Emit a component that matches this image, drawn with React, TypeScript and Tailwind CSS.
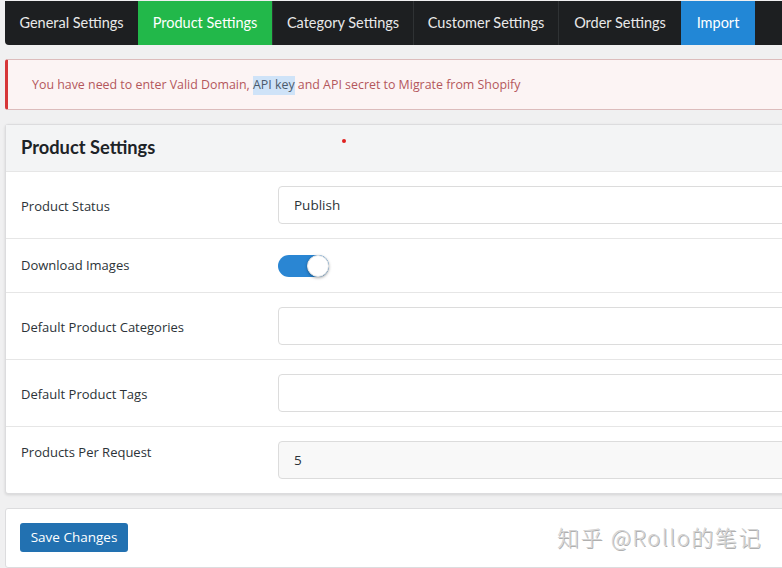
import React from "react";

const tabs = [
  { label: "General Settings", w: 133, tone: "dark" },
  { label: "Product Settings", w: 134, tone: "green" },
  { label: "Category Settings", w: 141, tone: "dark" },
  { label: "Customer Settings", w: 145, tone: "dark" },
  { label: "Order Settings", w: 123, tone: "dark" },
  { label: "Import", w: 74, tone: "blue" },
];

const lato = { fontFamily: "Lato, 'Open Sans', sans-serif" };
const body = { fontFamily: "'Open Sans', 'Noto Sans', sans-serif" };

function TextField({ value, muted }: { value?: string; muted?: boolean }) {
  return (
    <div
      className={`h-[38px] flex-1 rounded-[4px] border border-[#dcdcdc] flex items-center pl-[15px] text-[13.5px] text-[#2c3338] ${
        muted ? "bg-[#f8f8f8]" : "bg-white"
      }`}
    >
      {value}
    </div>
  );
}

function Toggle() {
  return (
    <div className="relative h-[22px] w-[51px] rounded-full bg-[#2a86d3]">
      <div className="absolute right-0 top-0 h-[22px] w-[22px] rounded-full bg-white shadow-[0_1px_3px_rgba(0,0,0,0.35)] border border-[#e5e5e5]" />
    </div>
  );
}

function Row({
  label,
  children,
  align = "field",
}: {
  label: string;
  children: React.ReactNode;
  align?: "field" | "top" | "plain";
}) {
  const labelPad =
    align === "top" ? "leading-[22px]" : align === "field" ? "pt-[3px]" : "";
  return (
    <div
      className={`flex border-t border-[#e6e6e6] py-[14px] ${
        align === "top" ? "items-start" : "items-center"
      }`}
    >
      <div className={`w-[272px] shrink-0 pl-[15px] text-[13px] text-[#2c3338] ${labelPad}`}>
        {label}
      </div>
      <div className="flex flex-1 items-center">{children}</div>
    </div>
  );
}

export default function App() {
  return (
    <div
      className="relative h-[568px] w-[782px] overflow-hidden bg-[#f0f0f1] pl-[5px] pt-px"
      style={body}
    >
      <div className="w-[800px]">
        {/* tab bar */}
        <div className="flex h-[44px] rounded-bl-[4px] bg-[#1d1f21]" style={lato}>
          {tabs.map((t, i) => (
            <div
              key={t.label}
              style={{ width: t.w }}
              className={`flex items-center justify-center text-[14.5px] ${
                t.tone === "green"
                  ? "bg-[#22b84a] text-white"
                  : t.tone === "blue"
                  ? "bg-[#2287d6] text-white"
                  : "text-[#e9e9e9]"
              } ${i > 1 && t.tone === "dark" ? "border-l border-[#2f3234]" : ""} ${
                i === 0 ? "rounded-bl-[4px]" : ""
              }`}
            >
              {t.label}
            </div>
          ))}
        </div>

        {/* notice */}
        <div className="mt-[14px] flex h-[51px] items-center rounded-[3px] border border-[#dcbcbc] border-l-[3px] border-l-[#d63638] bg-[#fcf4f4] pl-[24px] pt-[2px] text-[12.4px] text-[#b4575c]">
          You have need to enter Valid Domain,&nbsp;
          <span className="bg-[#cfe3f8] text-[#4b5a6c]">API key</span>
          &nbsp;and API secret to Migrate from Shopify
        </div>

        {/* settings panel */}
        <div className="mt-[14px] rounded-[3px] border border-[#dcdcde] bg-white shadow-[0_1px_3px_rgba(0,0,0,0.12)]">
          <div className="relative flex h-[46px] items-center bg-[#f3f4f5] pl-[15px] text-[18.3px] font-bold text-[#1d2327]" style={lato}>
            Product Settings
            <span className="absolute left-[336px] top-[14px] h-[4px] w-[4px] rounded-full bg-[#e0201f]" />
          </div>
          <Row label="Product Status">
            <TextField value="Publish" />
          </Row>
          <Row label="Download Images" align="plain">
            <div className="flex h-[25px] items-center">
              <Toggle />
            </div>
          </Row>
          <Row label="Default Product Categories">
            <TextField />
          </Row>
          <Row label="Default Product Tags">
            <TextField />
          </Row>
          <Row label="Products Per Request" align="top">
            <TextField value="5" muted />
          </Row>
        </div>

        {/* save bar */}
        <div className="mt-[14px] h-[60px] rounded-[3px] border border-[#dcdcde] bg-white pl-[14px] pt-[14px]">
          <button className="h-[29px] w-[108px] rounded-[3px] bg-[#2271b1] text-[13.5px] text-white">
            Save Changes
          </button>
        </div>
      </div>

      <div
        className="absolute left-[557px] top-[520px] text-[22px] font-light tracking-[1.6px] text-[#d4d4d4] [text-shadow:1px_1px_0_#b0b0b0]"
        style={{ fontFamily: "'Noto Sans CJK SC', 'Noto Sans', sans-serif" }}
      >
        知乎 @Rollo的笔记
      </div>
    </div>
  );
}
